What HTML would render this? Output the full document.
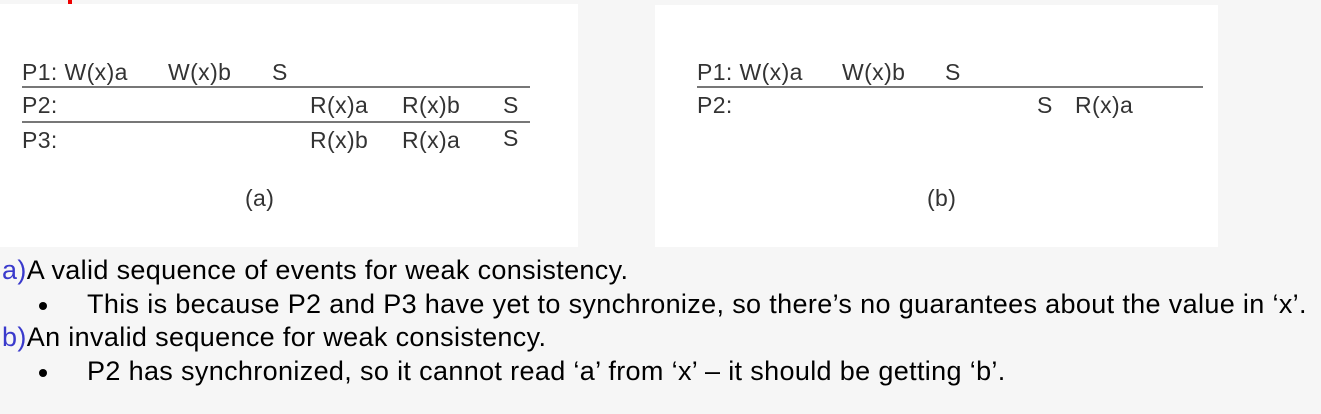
<!DOCTYPE html>
<html><head><meta charset="utf-8"><style>
body{margin:0;width:1321px;height:414px;background:#f6f6f6;position:relative;overflow:hidden;font-family:"Liberation Sans",Arial,sans-serif}
.p{position:absolute;background:#fff}
.t{position:absolute;font-size:23px;letter-spacing:0.4px;color:#333;white-space:nowrap;line-height:1}
.l{position:absolute;height:2px;background:#777}
.x{position:absolute;font-size:27px;color:#000;white-space:nowrap;line-height:1;letter-spacing:0.35px}
.b{color:#3a3acc}
.dot{position:absolute;width:8px;height:8px;border-radius:50%;background:#000}
</style></head><body>
<div style="position:absolute;left:68px;top:0;width:4px;height:4px;background:#e00"></div>
<div class="p" style="left:0;top:4px;width:578px;height:243px"></div>
<div class="p" style="left:655px;top:5px;width:563px;height:242px"></div>

<div class="t" style="left:22px;top:61px">P1: W(x)a</div>
<div class="t" style="left:168px;top:61px">W(x)b</div>
<div class="t" style="left:272px;top:61px">S</div>
<div class="l" style="left:22px;top:86px;width:508px"></div>
<div class="t" style="left:22px;top:94px">P2:</div>
<div class="t" style="left:310px;top:94px">R(x)a</div>
<div class="t" style="left:402px;top:94px">R(x)b</div>
<div class="t" style="left:503px;top:94px">S</div>
<div class="l" style="left:22px;top:121px;width:508px"></div>
<div class="t" style="left:22px;top:129px">P3:</div>
<div class="t" style="left:310px;top:129px">R(x)b</div>
<div class="t" style="left:402px;top:129px">R(x)a</div>
<div class="t" style="left:503px;top:127px">S</div>
<div class="t" style="left:245px;top:187px">(a)</div>

<div class="t" style="left:697px;top:61px">P1: W(x)a</div>
<div class="t" style="left:842px;top:61px">W(x)b</div>
<div class="t" style="left:945px;top:61px">S</div>
<div class="l" style="left:697px;top:86px;width:506px"></div>
<div class="t" style="left:697px;top:94px">P2:</div>
<div class="t" style="left:1037px;top:94px">S</div>
<div class="t" style="left:1075px;top:94px">R(x)a</div>
<div class="t" style="left:927px;top:187px">(b)</div>

<div class="x" style="left:2px;top:257px"><span class="b">a)</span>A valid sequence of events for weak consistency.</div>
<div class="dot" style="left:39px;top:302px"></div>
<div class="x" style="left:87px;top:291px">This is because P2 and P3 have yet to synchronize, so there’s no guarantees about the value in ‘x’.</div>
<div class="x" style="left:2px;top:324px"><span class="b">b)</span>An invalid sequence for weak consistency.</div>
<div class="dot" style="left:39px;top:369px"></div>
<div class="x" style="left:87px;top:358px">P2 has synchronized, so it cannot read ‘a’ from ‘x’ – it should be getting ‘b’.</div>
</body></html>
